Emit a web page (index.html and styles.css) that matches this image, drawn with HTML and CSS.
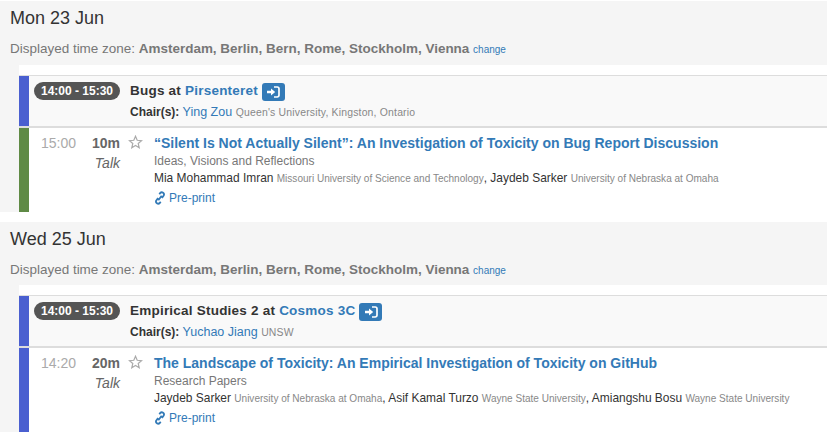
FILE: index.html
```html
<!DOCTYPE html>
<html lang="en">
<head>
  <meta charset="UTF-8" />
  <title>Program</title>
  <link rel="stylesheet" href="styles.css">
</head>
<body>
  <section class="day day-first">
    <div class="day-head">
      <h4 class="day-title">Mon 23 Jun</h4>
      <p class="zone">Displayed time zone: <b>Amsterdam, Berlin, Bern, Rome, Stockholm, Vienna</b> <a href="#">change</a></p>
    </div>
    <div class="gutter">
      <div class="sessions">
        <div class="session-row">
          <div class="bar bar-blue"></div>
          <div class="time-col"><span class="time-pill">14:00 - 15:30</span></div>
          <div class="session-info">
            <div class="session-title">Bugs at <a href="#">Pirsenteret</a>
              <span class="room-btn"><svg width="14" height="12" viewBox="0 0 14 12"><path d="M1 4.700h4V2.600L9.200 6 5 9.400V7.300H1z" fill="#fff"/><path d="M8 1h3.200A1.800 1.800 0 0 1 13 2.800v6.400A1.800 1.800 0 0 1 11.200 11H8" fill="none" stroke="#fff" stroke-width="1.700"/></svg></span>
            </div>
            <div class="chairs"><b>Chair(s):</b> <a href="#">Ying Zou</a> <small>Queen's University, Kingston, Ontario</small></div>
          </div>
        </div>
        <div class="talk-row">
          <div class="bar bar-green"></div>
          <div class="talk-time">15:00</div>
          <div class="talk-len"><b>10m</b><i>Talk</i></div>
          <div class="talk-star"><svg width="15" height="14" viewBox="0 0 15 14"><path d="M7.500 1.300 9.200 5.300l4.300.4-3.300 2.800 1 4.200-3.700-2.200-3.700 2.200 1-4.200L1.500 5.700l4.300-.4z" fill="none" stroke="#aaa" stroke-width="1.200"/></svg></div>
          <div class="talk-info">
            <a class="talk-title" href="#">“Silent Is Not Actually Silent”: An Investigation of Toxicity on Bug Report Discussion</a>
            <div class="track">Ideas, Visions and Reflections</div>
            <div class="authors">Mia Mohammad Imran <small>Missouri University of Science and Technology</small>, Jaydeb Sarker <small>University of Nebraska at Omaha</small></div>
            <a class="preprint" href="#"><svg class="link-icon" width="12" height="14" viewBox="0 0 12 14"><path d="M4.300 9.300 7.700 4.700M5.300 3.200l.9-1.200a2.200 2.200 0 0 1 3.500 2.600L7.900 7M6.700 10.800l-.9 1.200a2.200 2.200 0 0 1-3.500-2.600L4.100 7" fill="none" stroke="#337ab7" stroke-width="1.800"/></svg>Pre-print</a>
          </div>
        </div>
      </div>
    </div>
  </section>

  <section class="day">
    <div class="day-head">
      <h4 class="day-title">Wed 25 Jun</h4>
      <p class="zone">Displayed time zone: <b>Amsterdam, Berlin, Bern, Rome, Stockholm, Vienna</b> <a href="#">change</a></p>
    </div>
    <div class="gutter">
      <div class="sessions">
        <div class="session-row">
          <div class="bar bar-blue"></div>
          <div class="time-col"><span class="time-pill">14:00 - 15:30</span></div>
          <div class="session-info">
            <div class="session-title">Empirical Studies 2 at <a href="#">Cosmos 3C</a>
              <span class="room-btn"><svg width="14" height="12" viewBox="0 0 14 12"><path d="M1 4.700h4V2.600L9.200 6 5 9.400V7.300H1z" fill="#fff"/><path d="M8 1h3.200A1.800 1.800 0 0 1 13 2.800v6.400A1.800 1.800 0 0 1 11.200 11H8" fill="none" stroke="#fff" stroke-width="1.700"/></svg></span>
            </div>
            <div class="chairs"><b>Chair(s):</b> <a href="#">Yuchao Jiang</a> <small>UNSW</small></div>
          </div>
        </div>
        <div class="talk-row">
          <div class="bar bar-blue"></div>
          <div class="talk-time">14:20</div>
          <div class="talk-len"><b>20m</b><i>Talk</i></div>
          <div class="talk-star"><svg width="15" height="14" viewBox="0 0 15 14"><path d="M7.500 1.300 9.200 5.300l4.300.4-3.300 2.800 1 4.200-3.700-2.200-3.700 2.200 1-4.200L1.500 5.700l4.300-.4z" fill="none" stroke="#aaa" stroke-width="1.200"/></svg></div>
          <div class="talk-info">
            <a class="talk-title" href="#">The Landscape of Toxicity: An Empirical Investigation of Toxicity on GitHub</a>
            <div class="track">Research Papers</div>
            <div class="authors">Jaydeb Sarker <small>University of Nebraska at Omaha</small>, Asif Kamal Turzo <small>Wayne State University</small>, Amiangshu Bosu <small>Wayne State University</small></div>
            <a class="preprint" href="#"><svg class="link-icon" width="12" height="14" viewBox="0 0 12 14"><path d="M4.300 9.300 7.700 4.700M5.300 3.200l.9-1.200a2.200 2.200 0 0 1 3.500 2.600L7.900 7M6.700 10.800l-.9 1.200a2.200 2.200 0 0 1-3.500-2.600L4.100 7" fill="none" stroke="#337ab7" stroke-width="1.800"/></svg>Pre-print</a>
          </div>
        </div>
      </div>
    </div>
  </section>
</body>
</html>
```

FILE: styles.css
```css
body {
  margin: 0;
  padding: 1px 0 0;
  background: #fff;
  color: #333;
  font-family: "Liberation Sans", Arial, sans-serif;
  font-size: 12px;
  line-height: 1.4;
  overflow: hidden;
}

a {
  color: #337ab7;
  text-decoration: none;
}

.day {
  background: #f5f5f5;
}

.day-first {
  margin-bottom: 10px;
}

.day-head {
  height: 63px;
  padding: 0 10px;
  box-sizing: border-box;
}

.day-first .day-head {
  height: 64px;
}

.day-title {
  margin: 0;
  padding-top: 7px;
  font-size: 18px;
  font-weight: 400;
  line-height: 20px;
}

.zone {
  margin: 11px 0 0;
  color: #777;
  font-size: 13.470px;
  line-height: 20px;
}

.zone a {
  font-size: 10px;
}

.gutter {
  padding-left: 19px;
}

.sessions {
  background: #fff;
  padding-top: 10px;
}

.bar {
  width: 10px;
  flex: none;
  align-self: stretch;
}

.bar-blue {
  background: #4a5fd0;
}

.bar-green {
  background: #5f8a45;
}

.session-row {
  display: flex;
  height: 50px;
  background: #f9f9f9;
  border-top: 1px solid #ddd;
  border-bottom: 2px solid #ddd;
}

.time-col {
  width: 101px;
  flex: none;
  padding: 6px 0 0 5px;
  box-sizing: border-box;
}

.time-pill {
  display: inline-block;
  width: 86px;
  height: 18px;
  border-radius: 9px;
  background: #555;
  color: #fff;
  font-size: 12px;
  font-weight: 700;
  line-height: 18px;
  text-align: center;
}

.session-info {
  flex: 1;
}

.session-title {
  height: 22px;
  margin-top: 5px;
  color: #333;
  font-size: 13.500px;
  font-weight: 700;
  line-height: 20px;
  letter-spacing: 0.220px;
}

.room-btn {
  display: inline-flex;
  align-items: center;
  justify-content: center;
  width: 23px;
  height: 18px;
  border-radius: 3px;
  background: #337ab7;
  vertical-align: -3px;
}

.chairs {
  font-size: 12.500px;
  line-height: 18px;
}

.chairs b {
  font-size: 12px;
}

.chairs small {
  color: #888;
  font-size: 10.450px;
  letter-spacing: 0.180px;
}

.talk-row {
  display: flex;
  height: 84px;
  background: #fff;
}

.talk-time {
  width: 47px;
  flex: none;
  padding: 5px 0 0;
  color: #aaa;
  font-size: 14px;
  line-height: 20px;
  text-align: right;
}

.talk-len {
  width: 44px;
  flex: none;
  padding-top: 5px;
  line-height: 20px;
  text-align: right;
}

.talk-len b {
  display: block;
  color: #666;
  font-size: 14px;
}

.talk-len i {
  display: block;
  color: #666;
  font-size: 14px;
}

.talk-star {
  width: 26px;
  flex: none;
  margin-left: 8px;
  padding-top: 7px;
}

.talk-info {
  flex: 1;
  padding-top: 5px;
}

.talk-title {
  display: block;
  font-size: 14px;
  font-weight: 700;
  line-height: 20px;
}

.track {
  color: #777;
  line-height: 16px;
}

.authors {
  margin-top: 1px;
  font-size: 11.950px;
  line-height: 17px;
}

.authors small {
  color: #888;
  font-size: 10.050px;
}

.preprint {
  display: block;
  margin-top: 2px;
  line-height: 18px;
}

.link-icon {
  margin-right: 3px;
  vertical-align: -3px;
}
```
